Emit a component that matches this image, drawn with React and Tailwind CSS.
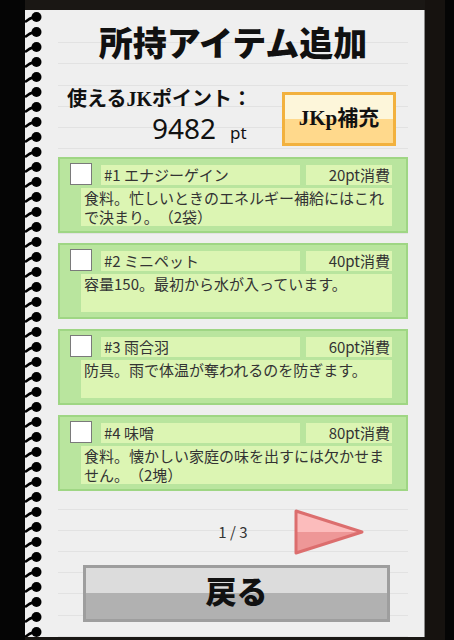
import React from 'react';

const items = [
  { no: 1, name: 'エナジーゲイン', cost: 20, desc: '食料。忙しいときのエネルギー補給にはこれで決まり。（2袋）' },
  { no: 2, name: 'ミニペット', cost: 40, desc: '容量150。最初から水が入っています。' },
  { no: 3, name: '雨合羽', cost: 60, desc: '防具。雨で体温が奪われるのを防ぎます。' },
  { no: 4, name: '味噌', cost: 80, desc: '食料。懐かしい家庭の味を出すには欠かせません。（2塊）' },
];

const jp = { fontFamily: '"Noto Sans CJK JP", "Noto Sans", sans-serif' };
const serif = { fontFamily: '"Liberation Serif", "Noto Sans CJK JP", serif' };

const Spiral = () => (
  <svg width="17" height="627" className="shrink-0">
    <defs>
      <pattern id="ring" width="17" height="15" patternUnits="userSpaceOnUse" y="2">
        <path d="M9 5 Q4 6.5 0 10" stroke="#000" strokeWidth="2.4" fill="none" />
        <circle cx="11.5" cy="5" r="5" fill="#000" />
      </pattern>
    </defs>
    <rect width="17" height="627" fill="url(#ring)" />
  </svg>
);

const ItemCard = ({ item }) => (
  <div className="h-[76px] border-2 border-[#9fd684] bg-[#b9e59e] pl-[10px] pr-[14px] pt-[4px] [text-spacing-trim:space-all]" style={jp}>
    <div className="flex items-start">
      <div className="w-[22px] h-[22px] bg-white border-[1.5px] border-[#7a7a7a]" />
      <div className="ml-[9px] mt-[2px] w-[199px] h-[20px] bg-[#dcf5b3] pl-[3px] text-[15px] leading-[20px] text-[#333]">
        #{item.no} {item.name}
      </div>
      <div className="ml-[6px] mt-[2px] flex-1 h-[20px] bg-[#dcf5b3] pr-[2px] text-right text-[15px] leading-[20px] text-[#333]">
        {item.cost}pt消費
      </div>
    </div>
    <div className="ml-[11px] mt-[3px] h-[38px] bg-[#dcf5b3] pl-[3px] pr-[4px] text-[15px] leading-[19px] text-[#333] break-all">
      {item.desc}
    </div>
  </div>
);

export default function App() {
  return (
    <div className="w-[454px] h-[640px] overflow-hidden flex bg-[#1a1714]">
      <div className="w-[25px] h-full bg-[#050505]" />
      <div className="mt-[10px] h-[627px] flex bg-[#efefef] border-r border-[#8a8a8a]">
        <Spiral />
        <div className="relative w-[382px] h-[627px]">
          <div className="absolute left-[16px] right-[16px] top-[12px] bottom-0 bg-[repeating-linear-gradient(to_bottom,transparent_0px,transparent_20.2px,#e2e2e2_20.2px,#e2e2e2_21.2px)]" />
          <div className="relative flex flex-col">
            <h1 className="mt-[15px] h-[40px] text-center text-[34px] leading-[40px] font-black text-[#111]" style={serif}>
              所持アイテム追加
            </h1>
            <div className="mt-[21px] flex">
              <div className="ml-[25px] w-[215px]">
                <div className="h-[26px] text-[20px] leading-[26px] font-bold text-[#111]" style={serif}>
                  使えるJKポイント：
                </div>
                <div className="h-[32px] pl-[85px] flex items-baseline text-[#111]" style={{ fontFamily: '"Noto Sans", sans-serif' }}>
                  <span className="text-[28px] leading-[32px]">9482</span>
                  <span className="ml-[14px] text-[17px]">pt</span>
                </div>
              </div>
              <button
                className="mt-[6px] w-[114px] h-[54px] border-[3px] border-[#f2b13e] bg-[linear-gradient(to_bottom,#fdf6da_50%,#ffd98c_50%)] text-[21px] font-bold text-[#111]"
                style={serif}
              >
                JKp補充
              </button>
            </div>
            <div className="mt-[11px] mx-[16px] flex flex-col gap-[10px]">
              {items.map((it) => (
                <ItemCard key={it.no} item={it} />
              ))}
            </div>
            <div className="mt-[18px] h-[46px] flex items-center pl-[161px]">
              <div className="w-[60px] text-center text-[15px] text-[#333] whitespace-pre" style={jp}>1 / 3</div>
              <svg width="72" height="48" className="ml-[30px]">
                <defs>
                  <linearGradient id="tri" x1="0" y1="0" x2="0" y2="1">
                    <stop offset="50%" stopColor="#fcbcbc" />
                    <stop offset="50%" stopColor="#ee9797" />
                  </linearGradient>
                </defs>
                <polygon points="3,3 69,24 3,45" fill="url(#tri)" stroke="#dc6e6e" strokeWidth="3" strokeLinejoin="round" />
              </svg>
            </div>
            <button
              className="mt-[10px] ml-[41px] w-[307px] h-[57px] border-[3px] border-[#9e9e9e] bg-[linear-gradient(to_bottom,#dcdcdc_50%,#b1b1b1_50%)] text-[31px] font-black text-[#111]"
              style={serif}
            >
              戻る
            </button>
          </div>
        </div>
      </div>
      <div className="w-[20px] h-full bg-[#16120f]" />
      <div className="flex-1 h-full bg-[#050505]" />
    </div>
  );
}
